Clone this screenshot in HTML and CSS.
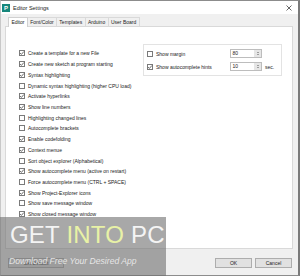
FILE: index.html
```html
<!DOCTYPE html>
<html>
<head>
<meta charset="utf-8">
<link rel="stylesheet" href="styles.css">
</head>
<body>
<div class="window">
  <div class="titlebar">
    <div class="app-icon">P</div>
    <div class="title">Editor Settings</div>
    <div class="close">
      <svg width="6" height="6" viewBox="0 0 6 6"><path d="M0.5 0.5 L5.5 5.5 M5.5 0.5 L0.5 5.5" stroke="#555" stroke-width="0.9"/></svg>
    </div>
  </div>
  <div class="body">
    <div class="tabs">
      <div class="tab active">Editor</div>
      <div class="tab">Font/Color</div>
      <div class="tab">Templates</div>
      <div class="tab">Arduino</div>
      <div class="tab">User Board</div>
    </div>
    <div class="panel">
      <div class="list">
        <div class="row"><span class="cb"><svg viewBox="0 0 6 6"><path d="M1.1 3.1 L2.4 4.4 L4.9 1.5" fill="none" stroke="#444" stroke-width="0.8"/></svg></span>Create a template for a new File</div>
        <div class="row"><span class="cb"><svg viewBox="0 0 6 6"><path d="M1.1 3.1 L2.4 4.4 L4.9 1.5" fill="none" stroke="#444" stroke-width="0.8"/></svg></span>Create new sketch at program starting</div>
        <div class="row"><span class="cb"><svg viewBox="0 0 6 6"><path d="M1.1 3.1 L2.4 4.4 L4.9 1.5" fill="none" stroke="#444" stroke-width="0.8"/></svg></span>Syntax highlighting</div>
        <div class="row"><span class="cb"></span>Dynamic syntax highlighting (higher CPU load)</div>
        <div class="row"><span class="cb"><svg viewBox="0 0 6 6"><path d="M1.1 3.1 L2.4 4.4 L4.9 1.5" fill="none" stroke="#444" stroke-width="0.8"/></svg></span>Activate hyperlinks</div>
        <div class="row"><span class="cb"><svg viewBox="0 0 6 6"><path d="M1.1 3.1 L2.4 4.4 L4.9 1.5" fill="none" stroke="#444" stroke-width="0.8"/></svg></span>Show line numbers</div>
        <div class="row"><span class="cb"></span>Highlighting changed lines</div>
        <div class="row"><span class="cb"></span>Autocomplete brackets</div>
        <div class="row"><span class="cb"><svg viewBox="0 0 6 6"><path d="M1.1 3.1 L2.4 4.4 L4.9 1.5" fill="none" stroke="#444" stroke-width="0.8"/></svg></span>Enable codefolding</div>
        <div class="row"><span class="cb"><svg viewBox="0 0 6 6"><path d="M1.1 3.1 L2.4 4.4 L4.9 1.5" fill="none" stroke="#444" stroke-width="0.8"/></svg></span>Context menue</div>
        <div class="row"><span class="cb"></span>Sort object explorer (Alphabetical)</div>
        <div class="row"><span class="cb"><svg viewBox="0 0 6 6"><path d="M1.1 3.1 L2.4 4.4 L4.9 1.5" fill="none" stroke="#444" stroke-width="0.8"/></svg></span>Show autocomplete menu (active on restart)</div>
        <div class="row"><span class="cb"></span>Force autocomplete menu (CTRL + SPACE)</div>
        <div class="row"><span class="cb"><svg viewBox="0 0 6 6"><path d="M1.1 3.1 L2.4 4.4 L4.9 1.5" fill="none" stroke="#444" stroke-width="0.8"/></svg></span>Show Project-Explorer icons</div>
        <div class="row"><span class="cb"></span>Show save message window</div>
        <div class="row"><span class="cb"><svg viewBox="0 0 6 6"><path d="M1.1 3.1 L2.4 4.4 L4.9 1.5" fill="none" stroke="#444" stroke-width="0.8"/></svg></span>Show closed message window</div>
      </div>
      <div class="group">
        <div class="grow"><span class="cb"></span><span class="glabel">Show margin</span><span class="spin"><span class="val">80</span><span class="arrows"><i class="up"></i><i class="down"></i></span></span></div>
        <div class="grow"><span class="cb"><svg viewBox="0 0 6 6"><path d="M1.1 3.1 L2.4 4.4 L4.9 1.5" fill="none" stroke="#444" stroke-width="0.8"/></svg></span><span class="glabel">Show autocomplete hints</span><span class="spin"><span class="val">10</span><span class="arrows"><i class="up"></i><i class="down"></i></span></span><span class="unit">sec.</span></div>
      </div>
    </div>
    <div class="footer">
      <div class="btn wide">Set Default</div>
      <div class="spacer"></div>
      <div class="btn">OK</div>
      <div class="btn">Cancel</div>
    </div>
  </div>
  <div class="watermark">
    <div class="wm-big">GET <span class="into">INTO</span> PC</div>
    <div class="wm-small">Download Free Your Desired App</div>
  </div>
</div>
</body>
</html>
```

FILE: styles.css
```css
* { box-sizing: border-box; }
html, body { margin: 0; padding: 0; }
body {
  width: 300px; height: 276px; overflow: hidden;
  font-family: "Liberation Sans", Arial, sans-serif;
  color: #1a1a1a;
  background: #fff;
}
.window {
  position: relative;
  width: 300px; height: 276px;
  border: 1px solid #8c8c8c;
  border-left-color: #c8c8c8;
  border-right: 2px solid #7a7a7a;
  display: flex; flex-direction: column;
  background: #f0f0f0;
}
.titlebar {
  height: 13px; background: #fff;
  display: flex; align-items: center;
  padding: 0 6px 0 1px;
}
.app-icon {
  width: 8px; height: 8px; background: #17877b;
  color: #fff; font-size: 6px; font-weight: bold; line-height: 8px;
  text-align: center; margin-right: 3px;
}
.title { font-size: 5.5px; flex: 1; color: #222; }
.close { width: 6px; height: 6px; display: flex; }
.body {
  flex: 1; display: flex; flex-direction: column;
  padding: 2px 5px 0 4px;
}
.tabs { display: flex; height: 10px; padding-left: 3px; align-items: flex-end; }
.tab {
  font-size: 5px; height: 9px; line-height: 8px;
  padding: 0 2.4px; border: 1px solid #d9d9d9; border-bottom: none;
  margin-left: -1px; background: #f0f0f0; color: #222;
}
.tab.active {
  height: 10px; background: #fff; margin-left: 0; position: relative; z-index: 1;
  border-color: #d0d0d0; margin-bottom: -1px;
}
.panel {
  height: 223px; background: #fff; border: 1px solid #d9d9d9;
  display: flex; align-items: flex-start;
}
.list { width: 137px; padding: 21px 0 0 13px; }
.row {
  height: 10.73px; display: flex; align-items: center;
  font-size: 5px; white-space: nowrap; color: #222;
}
.cb {
  width: 6px; height: 6px; border: 1px solid #7a7a7a; background: #fff;
  margin-right: 3px; flex: none; display: flex;
}
.cb svg { width: 6px; height: 6px; margin: -1px; flex: none; }
.group {
  margin-top: 17px; width: 139px; height: 32px;
  border: 1px solid #e3e3e3; padding: 4px 0 0 3px;
  display: flex; flex-direction: column; gap: 4px;
}
.grow { display: flex; align-items: center; height: 9px; font-size: 5px; white-space: nowrap; }
.glabel { width: 74px; }
.spin {
  width: 32px; height: 9px; border: 1px solid #bdbdbd; display: flex; background: #fff;
}
.val { flex: 1; font-size: 5px; line-height: 7px; padding-left: 1.5px; }
.arrows { width: 7px; background: #e6e6e6; display: flex; flex-direction: column; align-items: center; justify-content: center; gap: 1px; }
.arrows i { display: block; width: 0; height: 0; border-left: 1.5px solid transparent; border-right: 1.5px solid transparent; }
.arrows .up { border-bottom: 1.5px solid #555; }
.arrows .down { border-top: 1.5px solid #555; }
.unit { font-size: 5px; margin-left: 3px; }
.footer { display: flex; align-items: center; padding: 9px 1px 0 3px; gap: 3px; }
.spacer { flex: 1; }
.btn {
  width: 37px; height: 10px; border: 1px solid #adadad; background: #e1e1e1;
  font-size: 5px; text-align: center; line-height: 8px; color: #222;
}
.btn.wide { width: 56px; }
.watermark {
  position: absolute; left: -1px; top: 216px; width: 166px; height: 60px;
  background: rgba(110, 110, 110, 0.6);
  padding: 8px 0 0 10px;
}
.wm-big {
  font-family: "Liberation Sans", Arial, sans-serif;
  font-size: 24px; line-height: 20px; color: #f4f4f4; letter-spacing: 0.2px;
  white-space: nowrap;
}
.wm-big .into { color: #e8f2a6; }
.wm-small {
  margin-top: 11px; font-size: 8.6px; font-style: italic; color: rgba(255,255,255,0.75);
  white-space: nowrap; margin-left: -1px;
}
```
